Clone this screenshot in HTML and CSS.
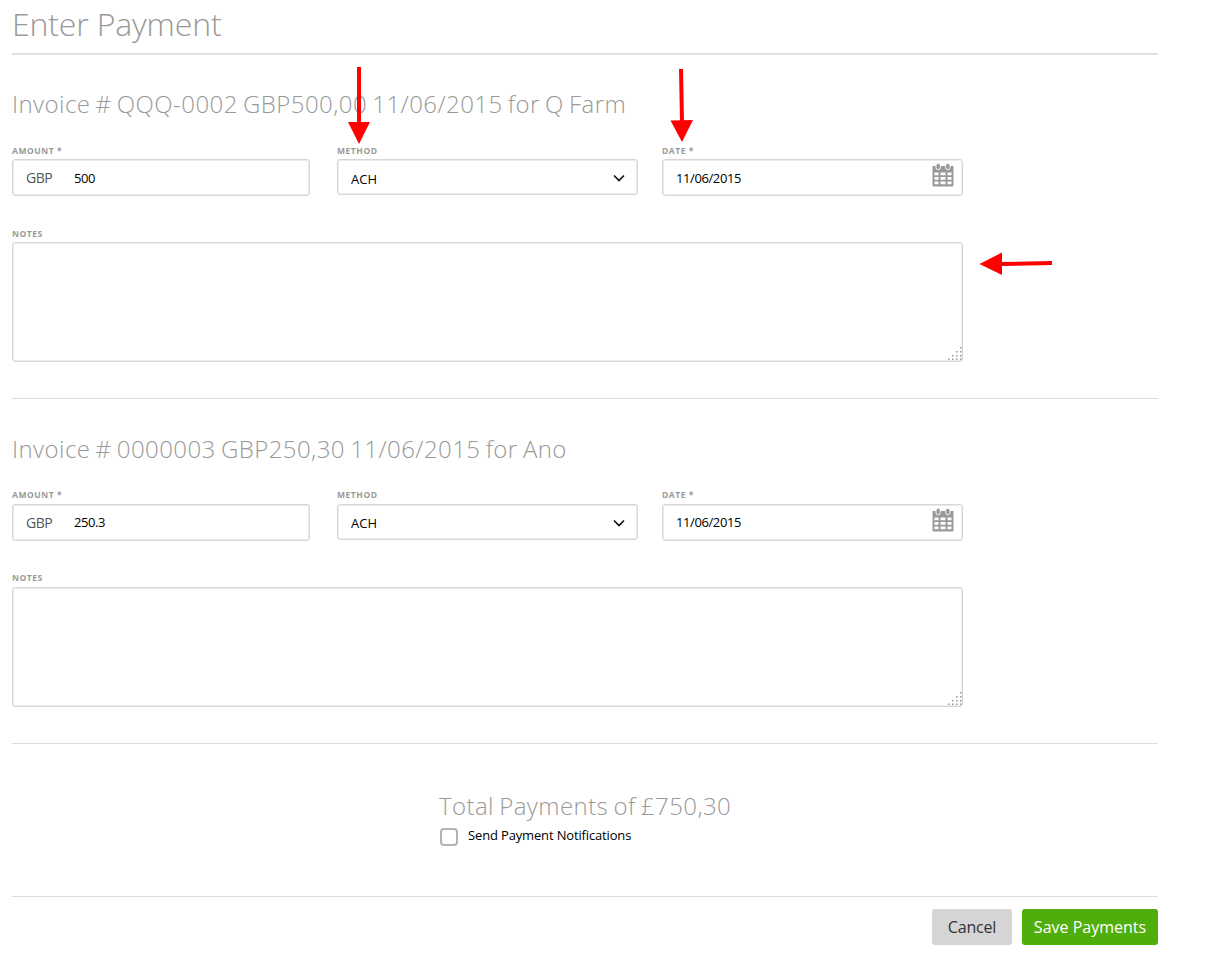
FILE: index.html
```
<!DOCTYPE html>
<html lang="en">
<head>
    <meta charset="UTF-8">
    <meta name="viewport" content="width=device-width, initial-scale=1.0">
    <title>Enter Payment</title>
    <link rel="stylesheet" href="styles.css">
</head>
<body>
    <!-- Shared icons -->
    <svg class="sprite" width="0" height="0">
        <symbol id="icon-calendar" viewBox="0 0 22 24">
            <path fill="#999" fill-rule="evenodd" d="M0.500 3h21v19.500q0 1-1 1h-19q-1 0-1-1zM2.500 9.500v2.700h4v-2.700zM8.500 9.500v2.700h5v-2.700zM15.500 9.500v2.700h4v-2.700zM2.500 14v2.700h4V14zM8.500 14v2.700h5V14zM15.500 14v2.700h4V14zM2.500 18.500v2.700h4v-2.700zM8.500 18.500v2.700h5v-2.700zM15.500 18.500v2.700h4v-2.700z"/>
            <rect x="4" y="0.300" width="4.400" height="6.400" rx="2.200" fill="#999" stroke="#fff" stroke-width="0.900"/>
            <rect x="13.600" y="0.300" width="4.400" height="6.400" rx="2.200" fill="#999" stroke="#fff" stroke-width="0.900"/>
        </symbol>
        <symbol id="icon-grip" viewBox="0 0 14 14">
            <path fill="#999" d="M12 0h1.500v1.500H12zM8 4h1.500v1.500H8zM12 4h1.500v1.500H12zM4 8h1.500v1.500H4zM8 8h1.500v1.500H8zM12 8h1.500v1.500H12zM0 11.500h1.500V13H0zM4 11.500h1.500V13H4zM8 11.500h1.500V13H8zM12 11.500h1.500V13H12z"/>
        </symbol>
    </svg>

    <main>
        <header>
            <h1>Enter Payment</h1>
        </header>

        <form>
            <section class="invoice">
                <h2>Invoice # QQQ-0002 GBP500,00 11/06/2015 for Q Farm</h2>
                <div class="fields">
                    <div class="field">
                        <label for="amount-1">Amount *</label>
                        <div class="control amount">
                            <span class="currency">GBP</span>
                            <input type="text" id="amount-1" value="500">
                        </div>
                    </div>
                    <div class="field">
                        <label for="method-1">Method</label>
                        <div class="control method">
                            <select id="method-1"><option>ACH</option></select>
                            <svg class="chevron" width="14" height="10" viewBox="0 0 14 10"><path d="M2 2.500L7 7.500L12 2.500" fill="none" stroke="#111" stroke-width="1.700"/></svg>
                        </div>
                    </div>
                    <div class="field">
                        <label for="date-1">Date *</label>
                        <div class="control date">
                            <input type="text" id="date-1" value="11/06/2015">
                            <svg class="calendar" width="22" height="24"><use href="#icon-calendar"/></svg>
                        </div>
                    </div>
                </div>
                <div class="notes">
                    <label for="notes-1">Notes</label>
                    <textarea id="notes-1"></textarea>
                    <svg class="grip" width="14" height="14"><use href="#icon-grip"/></svg>
                </div>
            </section>

            <section class="invoice">
                <h2>Invoice # 0000003 GBP250,30 11/06/2015 for Ano</h2>
                <div class="fields">
                    <div class="field">
                        <label for="amount-2">Amount *</label>
                        <div class="control amount">
                            <span class="currency">GBP</span>
                            <input type="text" id="amount-2" value="250.3">
                        </div>
                    </div>
                    <div class="field">
                        <label for="method-2">Method</label>
                        <div class="control method">
                            <select id="method-2"><option>ACH</option></select>
                            <svg class="chevron" width="14" height="10" viewBox="0 0 14 10"><path d="M2 2.500L7 7.500L12 2.500" fill="none" stroke="#111" stroke-width="1.700"/></svg>
                        </div>
                    </div>
                    <div class="field">
                        <label for="date-2">Date *</label>
                        <div class="control date">
                            <input type="text" id="date-2" value="11/06/2015">
                            <svg class="calendar" width="22" height="24"><use href="#icon-calendar"/></svg>
                        </div>
                    </div>
                </div>
                <div class="notes">
                    <label for="notes-2">Notes</label>
                    <textarea id="notes-2"></textarea>
                    <svg class="grip" width="14" height="14"><use href="#icon-grip"/></svg>
                </div>
            </section>

            <section class="total">
                <h2>Total Payments of £750,30</h2>
                <label class="notify">
                    <input type="checkbox">
                    <span>Send Payment Notifications</span>
                </label>
            </section>

            <div class="actions">
                <button type="button" class="btn cancel">Cancel</button>
                <button type="submit" class="btn save">Save Payments</button>
            </div>
        </form>
    </main>

    <!-- Red arrows over the page -->
    <svg class="arrows" width="1208" height="965" viewBox="0 0 1208 965">
        <g stroke="#f00" stroke-width="4">
            <path d="M359 67V124"/>
            <path d="M681 69L682 122"/>
            <path d="M1052 263L1000 264"/>
        </g>
        <g fill="#f00">
            <path d="M348 122H370L359 144z"/>
            <path d="M670.500 120.500L693 120L682 142z"/>
            <path d="M1002 252.500V275L979.500 264z"/>
        </g>
    </svg>
</body>
</html>
```
FILE: styles.css
```
* {
    box-sizing: border-box;
    margin: 0;
    padding: 0;
}

body {
    font-family: 'Open Sans', sans-serif;
    background-color: #fff;
    color: #000;
    font-size: 13px;
}

.sprite {
    position: absolute;
}

main {
    width: 1146px;
    margin-left: 12px;
}

header {
    height: 55px;
    border-bottom: 2px solid #e0e0e0;
}

h1, h2 {
    font-weight: 300;
    color: #999;
    white-space: nowrap;
}

h1 {
    font-size: 32px;
    line-height: 48px;
    letter-spacing: -0.15px;
}

h2 {
    font-size: 24px;
    line-height: 32px;
    letter-spacing: 0.43px;
    word-spacing: -1.4px;
}

/* Invoices */
.invoice {
    padding: 33px 0 36px;
    border-bottom: 1px solid #dcdcdc;
}

.invoice + .invoice {
    padding-top: 34px;
}

.fields {
    display: grid;
    grid-template-columns: 298px 301px 301px;
    column-gap: 27px;
    margin-top: 23px;
    height: 83px;
}

.fields .field:last-child {
    margin-left: -3px;
    margin-right: 3px;
}

.field label,
.notes label {
    display: block;
    font-size: 8.5px;
    font-weight: 700;
    line-height: 15px;
    letter-spacing: 0.55px;
    margin-bottom: 1px;
    text-transform: uppercase;
    color: #999;
}

.invoice + .invoice label {
    margin-top: -1px;
    margin-bottom: 2px;
}

.control {
    display: flex;
    align-items: center;
    height: 37px;
    border: 1px solid #d6d6d6;
    border-radius: 3px;
    box-shadow: inset 0 0 0 1px #ececec;
}

.control input,
.control select {
    flex: 1;
    min-width: 0;
    height: 100%;
    border: none;
    outline: none;
    background: none;
    appearance: none;
    color: #000;
    font-family: inherit;
    font-size: 13px;
}

.control input {
    letter-spacing: -0.4px;
}

.amount .currency {
    width: 61px;
    padding-left: 13px;
    font-size: 14px;
    letter-spacing: -0.5px;
    color: #555;
}

.method {
    height: 36px;
    padding: 2px 11px 0 13px;
}

.method select {
    padding-top: 1px;
}

.date {
    padding: 0 8px 0 13px;
}

.date .calendar {
    margin-top: -5px;
}

.invoice + .invoice .control input,
.invoice + .invoice .control select {
    padding-bottom: 2px;
}

/* Notes */
.notes {
    position: relative;
    width: 951px;
}

.notes textarea {
    display: block;
    width: 100%;
    height: 120px;
    border: 1px solid #d6d6d6;
    border-radius: 3px;
    box-shadow: inset 0 0 0 1px #ececec;
    resize: none;
}

.notes .grip {
    position: absolute;
    right: 1px;
    bottom: 1px;
}

/* Total */
.total {
    height: 153px;
    padding: 46px 0 0 427px;
    border-bottom: 1px solid #dcdcdc;
}

.notify {
    display: flex;
    align-items: center;
    gap: 10px;
    padding: 2px 0 0 1px;
    letter-spacing: -0.15px;
}

.notify input {
    appearance: none;
    width: 18px;
    height: 18px;
    margin-top: 4px;
    border: 2px solid #b5b3b0;
    border-radius: 4px;
}

/* Buttons */
.actions {
    display: flex;
    justify-content: flex-end;
    gap: 10px;
    padding-top: 12px;
}

.btn {
    height: 36px;
    border: none;
    border-radius: 3px;
    font-family: inherit;
    font-size: 16px;
    white-space: nowrap;
    cursor: pointer;
}

.cancel {
    width: 80px;
    background-color: #d5d5d5;
    color: #333;
    letter-spacing: -0.2px;
}

.save {
    width: 136px;
    background-color: #4fae0b;
    color: #fff;
}

.arrows {
    position: absolute;
    top: 0;
    left: 0;
    pointer-events: none;
}
```
